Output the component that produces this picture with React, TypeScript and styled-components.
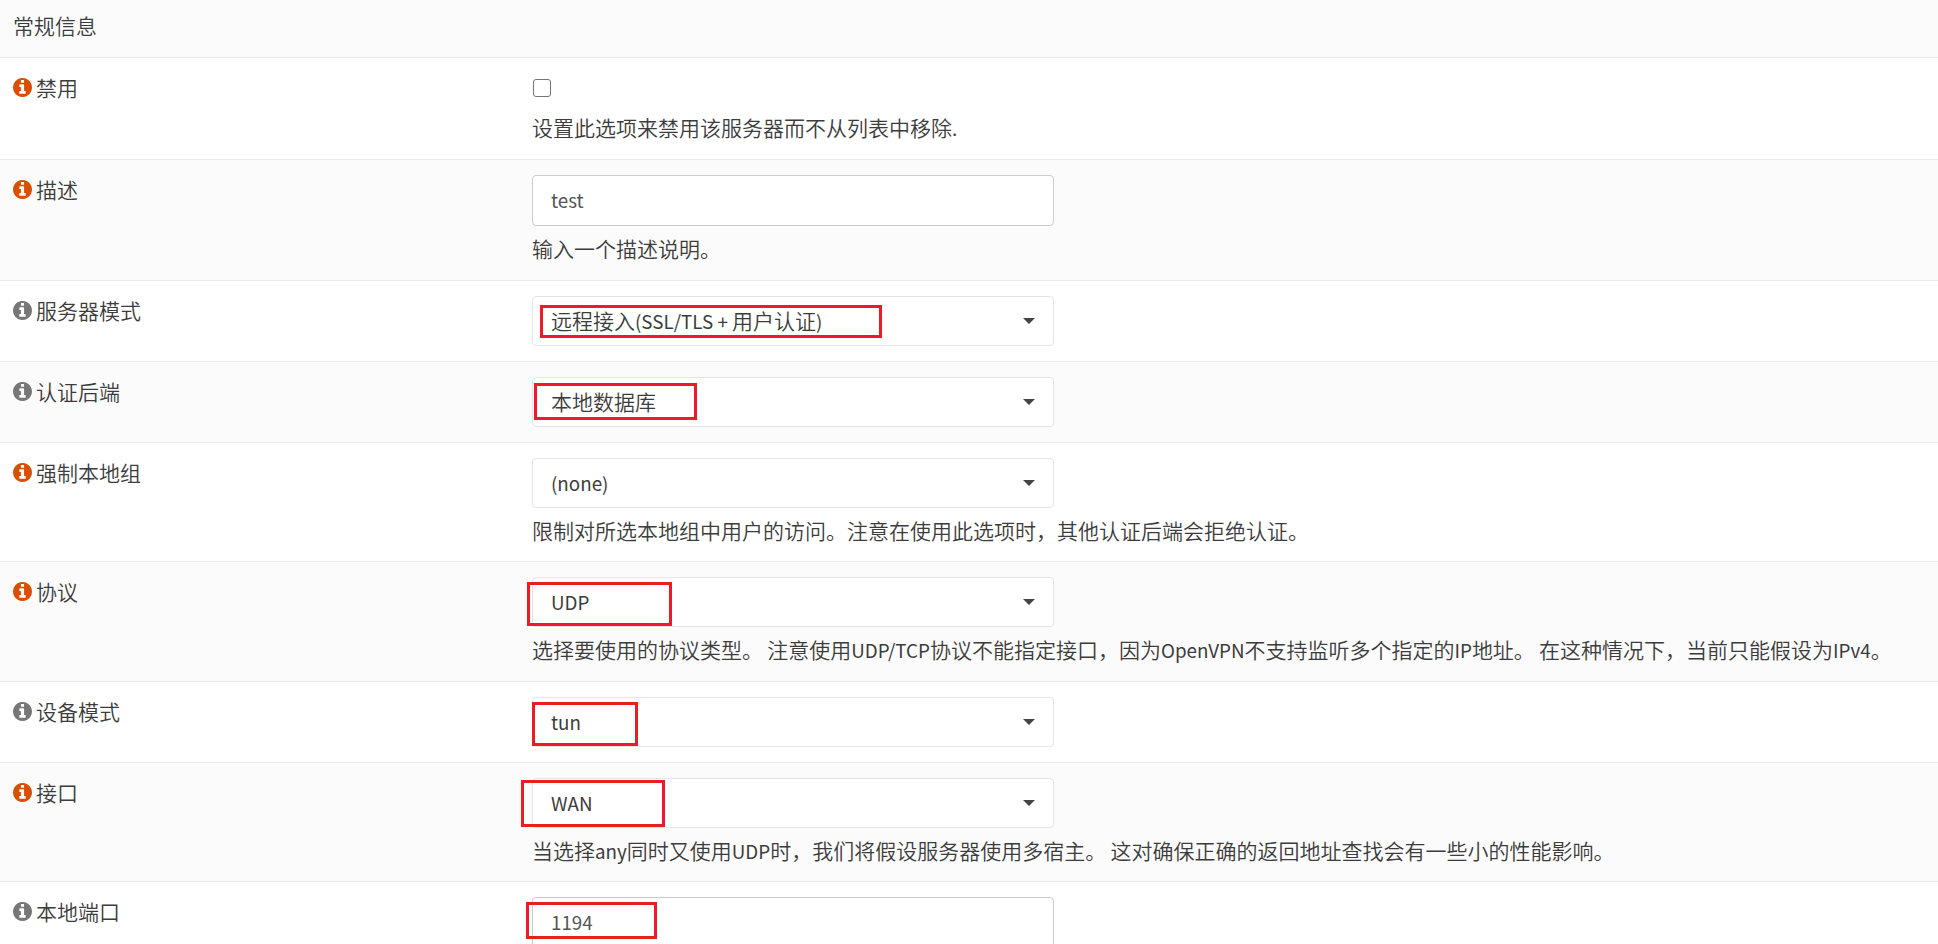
import React from 'react';
import styled, { createGlobalStyle } from 'styled-components';

const GlobalStyle = createGlobalStyle`
  * { box-sizing: border-box; }
  html, body { margin: 0; padding: 0; background: #fff; }
  body {
    height: 944px;
    overflow: hidden;
    color: #3c3c3c;
    font-family: 'Noto Sans CJK SC DemiLight', 'Noto Sans CJK SC', sans-serif;
    font-size: 21px;
    font-weight: 350;
    line-height: 30px;
  }
`;

const Page = styled.main`
  width: 1938px;
  height: 944px;
  overflow: hidden;
`;

const SectionHeader = styled.header`
  height: 57px;
  padding: 10px 13px;
  background: #fbfbfb;
  white-space: nowrap;
`;

const Row = styled.section<{ $height: number; $shaded?: boolean }>`
  display: grid;
  grid-template-columns: 519px 1fr;
  height: ${(p) => p.$height}px;
  padding: 15px 0 0 13px;
  border-top: 1px solid #ebebeb;
  background: ${(p) => (p.$shaded ? '#fbfbfb' : '#fff')};
`;

const LabelCell = styled.div`
  display: flex;
  align-items: center;
  gap: 4px;
  height: 27px;
  white-space: nowrap;
`;

const ContentCell = styled.div`
  white-space: nowrap;
`;

const InfoSvg = styled.svg<{ $active?: boolean }>`
  width: 19px;
  height: 19px;
  margin-top: 2px;
  flex: none;
  fill: ${(p) => (p.$active ? '#d94f00' : '#777')};
`;

const Latin = styled.span`
  font-family: 'Noto Sans CJK SC', sans-serif;
  font-size: 18.8px;
  font-weight: 400;
`;

const Control = styled.div<{ $input?: boolean }>`
  position: relative;
  display: flex;
  align-items: center;
  justify-content: space-between;
  width: 522px;
  height: ${(p) => (p.$input ? 51 : 50)}px;
  padding: 0 18px;
  border: 1px solid ${(p) => (p.$input ? '#ccc' : '#e5e5e5')};
  border-radius: 4px;
  background: #fff;
  color: ${(p) => (p.$input ? '#555' : '#3c3c3c')};
`;

const Value = styled.span`
  padding-bottom: 2px;
`;

const Caret = styled.span`
  border-top: 6px solid #444;
  border-left: 6px solid transparent;
  border-right: 6px solid transparent;
`;

const Checkbox = styled.span`
  display: block;
  width: 18px;
  height: 18px;
  margin: 6px 0 15px 1px;
  border: 1.5px solid #767676;
  border-radius: 3px;
  background: #fff;
`;

const Help = styled.div`
  margin-top: 7px;
  line-height: 30px;
`;

const Highlight = styled.span<{ $x: number; $y: number; $w: number; $h: number }>`
  position: absolute;
  left: ${(p) => p.$x - 1}px;
  top: ${(p) => p.$y - 1}px;
  width: ${(p) => p.$w}px;
  height: ${(p) => p.$h}px;
  border: 3px solid #ed1c24;
`;

const InfoIcon = ({ active }: { active?: boolean }) => (
  <InfoSvg $active={active} viewBox="128 128 1536 1536">
    <path d="M1152 1376v-160q0-14-9-23t-23-9h-96v-512q0-14-9-23t-23-9h-320q-14 0-23 9t-9 23v160q0 14 9 23t23 9h96v320h-96q-14 0-23 9t-9 23v160q0 14 9 23t23 9h448q14 0 23-9t9-23zM1024 480v-160q0-14-9-23t-23-9h-192q-14 0-23 9t-9 23v160q0 14 9 23t23 9h192q14 0 23-9t9-23zM1664 896q0 209-103 385.5t-279.5 279.5-385.5 103-385.5-103-279.5-279.5-103-385.5 103-385.5 279.5-279.5 385.5-103 385.5 103 279.5 279.5 103 385.5z" />
  </InfoSvg>
);

/* Latin runs are set slightly smaller than the Chinese text around them. */
const Mixed = ({ text }: { text: string }) => (
  <>
    {text
      .split(/([\x20-\x7e]+)/)
      .filter(Boolean)
      .map((part, i) => (/^[\x20-\x7e]/.test(part) ? <Latin key={i}>{part}</Latin> : part))}
  </>
);

type Box = [x: number, y: number, w: number, h: number];

interface Field {
  label: string;
  height: number;
  kind: 'checkbox' | 'input' | 'select';
  active?: boolean;
  value?: string;
  help?: string;
  mark?: Box;
}

const fields: Field[] = [
  { label: '禁用', height: 102, kind: 'checkbox', active: true, help: '设置此选项来禁用该服务器而不从列表中移除.' },
  { label: '描述', height: 121, kind: 'input', active: true, value: 'test', help: '输入一个描述说明。' },
  { label: '服务器模式', height: 81, kind: 'select', value: '远程接入(SSL/TLS + 用户认证)', mark: [8, 9, 342, 33] },
  { label: '认证后端', height: 81, kind: 'select', value: '本地数据库', mark: [2, 6, 163, 37] },
  { label: '强制本地组', height: 119, kind: 'select', active: true, value: '(none)', help: '限制对所选本地组中用户的访问。注意在使用此选项时，其他认证后端会拒绝认证。' },
  { label: '协议', height: 120, kind: 'select', active: true, value: 'UDP', help: '选择要使用的协议类型。 注意使用UDP/TCP协议不能指定接口，因为OpenVPN不支持监听多个指定的IP地址。 在这种情况下，当前只能假设为IPv4。', mark: [-5, 5, 145, 44] },
  { label: '设备模式', height: 81, kind: 'select', value: 'tun', mark: [0, 5, 106, 44] },
  { label: '接口', height: 119, kind: 'select', active: true, value: 'WAN', help: '当选择any同时又使用UDP时，我们将假设服务器使用多宿主。 这对确保正确的返回地址查找会有一些小的性能影响。', mark: [-11, 2, 144, 47] },
  { label: '本地端口', height: 121, kind: 'input', value: '1194', mark: [-6, 5, 131, 37] },
];

export default function App() {
  return (
    <Page>
      <GlobalStyle />
      <SectionHeader>常规信息</SectionHeader>
      {fields.map((f, i) => (
        <Row key={f.label} $height={f.height} $shaded={i % 2 === 1}>
          <LabelCell>
            <InfoIcon active={f.active} />
            {f.label}
          </LabelCell>
          <ContentCell>
            {f.kind === 'checkbox' ? (
              <Checkbox role="checkbox" aria-checked="false" />
            ) : (
              <Control $input={f.kind === 'input'}>
                <Value>
                  <Mixed text={f.value ?? ''} />
                </Value>
                {f.kind === 'select' && <Caret />}
                {f.mark && <Highlight $x={f.mark[0]} $y={f.mark[1]} $w={f.mark[2]} $h={f.mark[3]} />}
              </Control>
            )}
            {f.help && (
              <Help>
                <Mixed text={f.help} />
              </Help>
            )}
          </ContentCell>
        </Row>
      ))}
    </Page>
  );
}
